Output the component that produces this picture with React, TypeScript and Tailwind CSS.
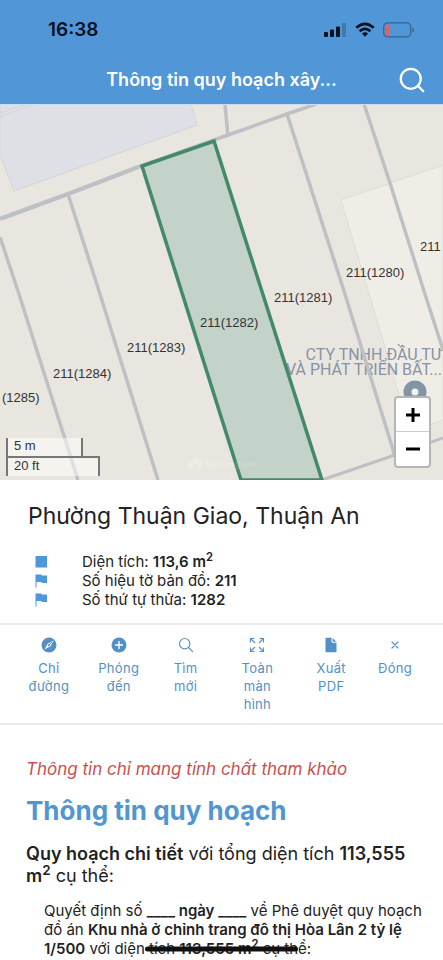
import { Search } from 'lucide-react'
import type { ReactNode } from 'react'

const plotLines = [
  'M0 133 L18 187 L78 376',
  'M68 90 L99 187 L158 376',
  'M225 0 L228 33',
  'M287 10 L344 187 L395 352',
  'M364 0 L390 79 L424 187 L443 246',
]

const plotLabels = [
  { x: 2, y: 298, text: '(1285)' },
  { x: 53, y: 274, text: '211(1284)' },
  { x: 127, y: 248, text: '211(1283)' },
  { x: 200, y: 223, text: '211(1282)' },
  { x: 274, y: 198, text: '211(1281)' },
  { x: 346, y: 173, text: '211(1280)' },
  { x: 420, y: 147, text: '211' },
]

const info = [
  { icon: 'square', label: 'Diện tích:', value: <>113,6 m<Sup /></> },
  { icon: 'flag', label: 'Số hiệu tờ bản đồ:', value: '211' },
  { icon: 'flag', label: 'Số thứ tự thửa:', value: '1282' },
]

const actions = [
  {
    label: 'Chỉ đường',
    width: 'w-14',
    icon: (
      <>
        <circle cx="8" cy="8" r="7.5" fill="currentColor" />
        <path d="M12.6 3.4 L9.5 9.2 L3.4 12.6 L6.6 6.8 Z" fill="#fff" />
        <path d="M11 5 L8 8" stroke="currentColor" strokeWidth="1" />
        <circle cx="7.8" cy="8.2" r="1" fill="currentColor" />
      </>
    ),
  },
  {
    label: 'Phóng đến',
    width: 'w-14',
    icon: (
      <>
        <circle cx="8" cy="8" r="7.5" fill="currentColor" />
        <path d="M8 4.5 V11.5 M4.5 8 H11.5" stroke="#fff" strokeWidth="1.4" strokeLinecap="round" />
      </>
    ),
  },
  {
    label: 'Tìm mới',
    width: 'w-10',
    icon: (
      <g fill="none" stroke="currentColor" strokeWidth="1.1" strokeLinecap="round">
        <circle cx="6.7" cy="6.7" r="5.2" />
        <path d="M10.5 10.5 L14.6 14.6" />
      </g>
    ),
  },
  {
    label: 'Toàn màn hình',
    width: 'w-12',
    icon: (
      <path
        d="M1.5 5.5 V1.5 H5.5 M1.5 1.5 L6 6 M10.5 1.5 H14.5 V5.5 M14.5 1.5 L10 6 M1.5 10.5 V14.5 H5.5 M1.5 14.5 L6 10 M14.5 10.5 V14.5 H10.5 M14.5 14.5 L10 10"
        fill="none"
        stroke="currentColor"
        strokeWidth="1.1"
      />
    ),
  },
  {
    label: 'Xuất PDF',
    width: 'w-10',
    icon: (
      <>
        <path d="M2.5 1.5 Q2.5 .7 3.3 .7 H8.5 V4.5 Q8.5 5.8 9.8 5.8 H13.5 V14.4 Q13.5 15.2 12.7 15.2 H3.3 Q2.5 15.2 2.5 14.4 Z" fill="currentColor" />
        <path d="M9.6 .9 L13.3 4.7 H10.2 Q9.6 4.7 9.6 4.1 Z" fill="currentColor" />
      </>
    ),
  },
  {
    label: 'Đóng',
    width: 'w-10',
    icon: <path d="M5 5 L11 11 M11 5 L5 11" stroke="currentColor" strokeWidth="1.2" strokeLinecap="round" />,
  },
]

function Sup() {
  return <sup className="text-[75%]">2</sup>
}

function StatusBar() {
  return (
    <div className="flex h-14 items-center justify-between pt-1 pr-7 pl-12">
      <span className="text-[19px] font-semibold text-[#08111f]">16:38</span>
      <div className="flex items-center gap-2">
        <svg width="24" height="16" viewBox="0 0 24 16" fill="#08111f">
          <rect x="1" y="10" width="4" height="5" rx="1" />
          <rect x="7" y="7.5" width="4" height="7.5" rx="1" />
          <rect x="13" y="4.5" width="4" height="10.5" rx="1" />
          <rect x="19" y="1" width="4" height="14" rx="1" fill="#4178ae" />
        </svg>
        <svg width="20" height="16" viewBox="0 0 20 16" fill="none" stroke="#08111f" strokeWidth="2.6">
          <path d="M1.3 5.8 Q10 -2 18.7 5.8" />
          <path d="M4.6 9.2 Q10 4.5 15.4 9.2" />
          <path d="M10 10.2 Q11.8 10.2 13 11.6 L10 14.7 L7 11.6 Q8.2 10.2 10 10.2 Z" fill="#08111f" stroke="none" />
        </svg>
        <svg width="32" height="16" viewBox="0 0 32 16">
          <rect x=".7" y=".9" width="27" height="14" rx="4" fill="none" stroke="#34638f" strokeWidth="1.2" />
          <rect x="2.5" y="2.7" width="4" height="10.4" rx="1.5" fill="#e3605c" />
          <path d="M29.3 5.5 Q31 6 31 8 Q31 10 29.3 10.5 Z" fill="#34638f" />
        </svg>
      </div>
    </div>
  )
}

function ParcelMap() {
  return (
    <svg viewBox="0 0 443 376" className="block w-full">
      <rect width="443" height="376" fill="#e9e6e0" />
      <path d="M0 0 H191 L197 21 L14 87 L0 51 Z" fill="#dfe0e5" stroke="#d3d4dc" />
      <path d="M0 9 L26 0 M0 13 L34 0" stroke="#cfd1d8" strokeWidth=".7" />
      <path d="M341 96 L443 61 V316 L410 328 L368 186 Z" fill="#f0ede6" stroke="#e0dcd5" />
      <path d="M0 115 L68 90 L141 62" stroke="#bfc0c5" strokeWidth="4.5" fill="none" />
      <path d="M141 62 L214 36 L287 10 L316 0" stroke="#bfc0c5" strokeWidth="3.5" fill="none" />
      <path d="M322 376 L395 351 L443 334" stroke="#bfc0c5" strokeWidth="3" fill="none" />
      <g fontFamily="Roboto, sans-serif" fontSize="16" fill="#8793a5" textAnchor="end">
        <text x="442" y="256">CTY TNHH ĐẦU TƯ</text>
        <text x="442" y="271">VÀ PHÁT TRIỂN BẤT...</text>
      </g>
      {plotLines.map((d) => (
        <path key={d} d={d} stroke="#bfc0c5" strokeWidth="3.5" fill="none" />
      ))}
      <path d="M142 62 L214 37 L322 376 H241 Z" fill="#c4d3ca" stroke="#43896b" strokeWidth="3.5" />
      <path d="M0 .5 H443" stroke="#c6dff5" />
      <g fontFamily="Liberation Sans" fontSize="13" fill="#333">
        {plotLabels.map((label) => (
          <text key={label.text} x={label.x} y={label.y}>{label.text}</text>
        ))}
      </g>
      <circle cx="415" cy="288" r="7.5" fill="#f3f3f3" stroke="#8394a5" strokeWidth="8" />
      <g fill="#fff" opacity=".2" fontFamily="Inter, sans-serif">
        <path d="M188 358 L195 352 L202 358 V365 H197 V360 H193 V365 H188 Z" />
        <text x="205" y="363" fontSize="9">Batdongsan</text>
      </g>
    </svg>
  )
}

function ActionButton({ label, width, children }: { label: string; width: string; children: ReactNode }) {
  return (
    <button className="flex flex-col items-center gap-1.5 text-[#5390c5]">
      <svg width="16" height="16" viewBox="0 0 16 16">{children}</svg>
      <span className={`${width} text-[13px] leading-[18px] tracking-wide`}>{label}</span>
    </button>
  )
}

export default function App() {
  return (
    <div className="min-h-screen overflow-hidden bg-white font-['Inter','Noto_Sans',sans-serif] text-[#222]">
      <header className="bg-[#5196d7]">
        <StatusBar />
        <div className="grid h-12 grid-cols-[1fr_auto_1fr] items-center px-4">
          <h1 className="col-start-2 text-lg font-semibold text-white">Thông tin quy hoạch xây...</h1>
          <button aria-label="Tìm kiếm" className="justify-self-end text-white">
            <Search size={30} strokeWidth={1.8} />
          </button>
        </div>
      </header>

      <section className="relative">
        <ParcelMap />
        <div className="absolute bottom-1 left-1.5 font-['Liberation_Sans',sans-serif] text-[13px] leading-4 text-[#333]">
          <div className="h-[18px] w-[77px] border-x-2 border-[#777] bg-white/50 pl-1.5">5 m</div>
          <div className="h-5 w-[94px] border-2 border-b-0 border-[#777] bg-white/50 pl-1.5">20 ft</div>
        </div>
        <div className="absolute right-3 bottom-3 flex w-[37px] flex-col rounded border-2 border-[#b4b5b6] bg-white text-black">
          <button aria-label="Phóng to" className="flex h-[34px] items-center justify-center border-b border-[#ccc]">
            <svg width="14" height="14" viewBox="0 0 14 14"><path d="M7 0 V14 M0 7 H14" stroke="currentColor" strokeWidth="3" /></svg>
          </button>
          <button aria-label="Thu nhỏ" className="flex h-[34px] items-center justify-center">
            <svg width="14" height="14" viewBox="0 0 14 14"><path d="M0 7 H14" stroke="currentColor" strokeWidth="3" /></svg>
          </button>
        </div>
      </section>

      <section className="px-7 pt-5 pb-3.5">
        <h2 className="text-[23px] leading-8">Phường Thuận Giao, Thuận An</h2>
        <ul className="mt-5 text-[15px] leading-[19px]">
          {info.map((row) => (
            <li key={row.label} className="flex items-center">
              <svg width="26" height="14" viewBox="0 0 26 14" className="mr-7 shrink-0" fill="#4d97da">
                {row.icon === 'square' ? (
                  <rect x="7.5" y="1" width="11.5" height="11.5" />
                ) : (
                  <path d="M7.5 .5 H13 L14 1.5 H19 V9 H14 L13 8 H8.5 V13.5 H7.5 Z" />
                )}
              </svg>
              <span>{row.label} <strong className="font-semibold">{row.value}</strong></span>
            </li>
          ))}
        </ul>
      </section>

      <nav className="grid h-[102px] grid-cols-[66fr_74fr_60fr_84fr_64fr_64fr] items-start border-y-2 border-[#ececec] px-4 pt-3">
        {actions.map((action) => (
          <ActionButton key={action.label} label={action.label} width={action.width}>{action.icon}</ActionButton>
        ))}
      </nav>

      <article className="pt-8 pr-4 pl-[26px]">
        <p className="text-[17px] leading-6 text-[#c8504e] italic">Thông tin chỉ mang tính chất tham khảo</p>
        <h2 className="mt-3 text-[26px] leading-9 font-bold text-[#5196d0]">Thông tin quy hoạch</h2>
        <p className="mt-3.5 text-lg leading-[22px]">
          <strong className="font-semibold">Quy hoạch chi tiết</strong> với tổng diện tích{' '}
          <strong className="font-semibold">113,555 m<Sup /></strong> cụ thể:
        </p>
        <p className="mt-3.5 pl-[18px] text-[15px] leading-[19px]">
          Quyết định số <strong className="font-semibold">____ ngày ____</strong> về Phê duyệt quy hoạch đồ án{' '}
          <strong className="font-semibold">Khu nhà ở chỉnh trang đô thị Hòa Lân 2 tỷ lệ 1/500</strong> với diện
          <s className="relative whitespace-nowrap no-underline">
            {' '}tích <strong className="font-semibold">113,555 m<Sup /></strong> cụ th
            <span className="absolute inset-x-0 top-1/2 h-[5px] -translate-y-1/2 rounded-full bg-[#111]" />
          </s>
          ể:
        </p>
      </article>
    </div>
  )
}
